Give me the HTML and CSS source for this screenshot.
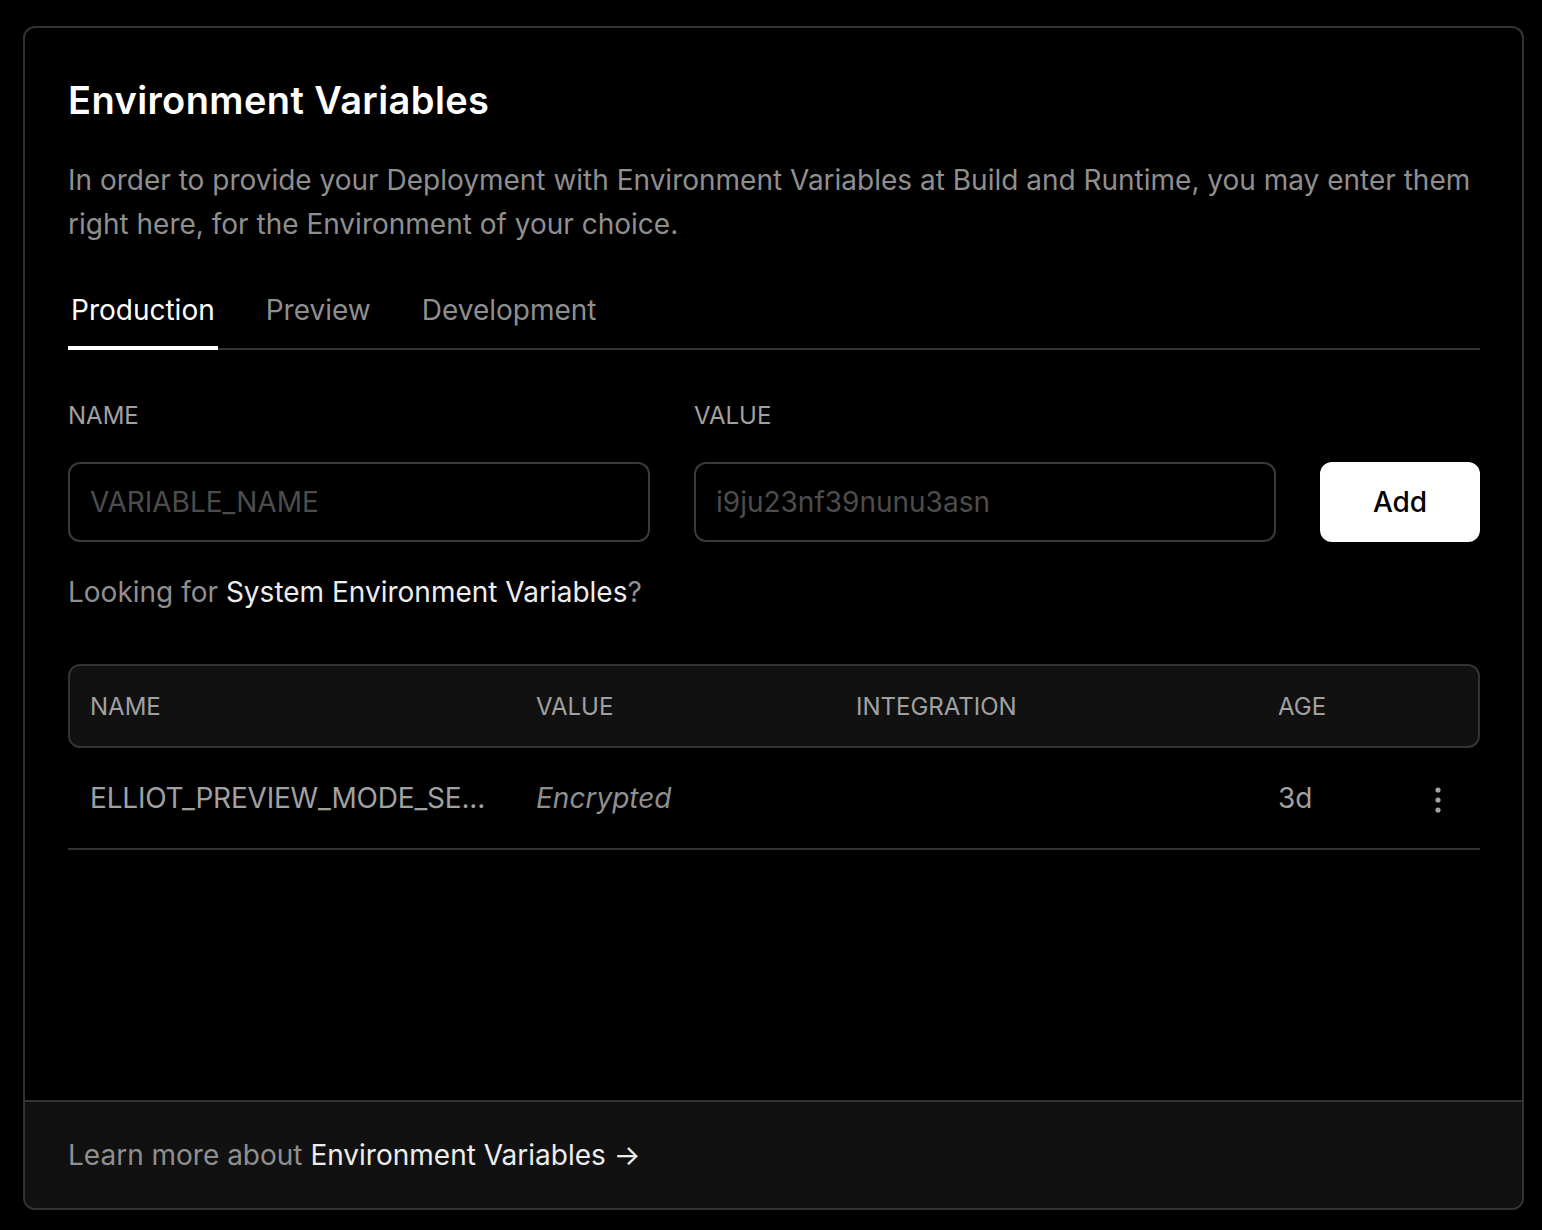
FILE: index.html
```html
<!DOCTYPE html>
<html lang="en">
<head>
<meta charset="utf-8">
<title>Environment Variables</title>
<link rel="stylesheet" href="styles.css">
</head>
<body>
<section class="card">
  <div class="card-body">
    <h1 class="title">Environment Variables</h1>
    <p class="desc">In order to provide your Deployment with Environment Variables at Build and Runtime, you may enter them right here, for the Environment of your choice.</p>

    <nav class="tabs">
      <span class="tab active">Production</span>
      <span class="tab">Preview</span>
      <span class="tab">Development</span>
    </nav>

    <div class="form">
      <div class="field">
        <label class="label">NAME</label>
        <div class="input placeholder">VARIABLE_NAME</div>
      </div>
      <div class="field">
        <label class="label">VALUE</label>
        <div class="input placeholder">i9ju23nf39nunu3asn</div>
      </div>
      <button class="btn">Add</button>
    </div>

    <p class="hint">Looking for <span class="strong">System Environment Variables</span>?</p>

    <div class="table">
      <div class="thead">
        <span class="cell">NAME</span>
        <span class="cell">VALUE</span>
        <span class="cell">INTEGRATION</span>
        <span class="cell">AGE</span>
        <span class="cell"></span>
      </div>
      <div class="row">
        <span class="cell name">ELLIOT_PREVIEW_MODE_SE...</span>
        <span class="cell enc">Encrypted</span>
        <span class="cell"></span>
        <span class="cell">3d</span>
        <span class="cell menu">
          <svg width="6" height="26" viewBox="0 0 6 26"><circle cx="3" cy="3" r="2.6" fill="#a1a1a1"/><circle cx="3" cy="13" r="2.6" fill="#a1a1a1"/><circle cx="3" cy="23" r="2.6" fill="#a1a1a1"/></svg>
        </span>
      </div>
    </div>
  </div>
  <footer class="card-foot">
    <span class="muted">Learn more about </span><span class="strong">Environment Variables →</span>
  </footer>
</section>
</body>
</html>
```

FILE: styles.css
```css
* { box-sizing: border-box; }
html, body { margin: 0; padding: 0; background: #000; }
body {
  font-family: Inter, "Noto Sans", sans-serif;
  color: #ededed;
  padding: 26px 18px 20px 23px;
}
.card {
  width: 1501px;
  height: 1184px;
  border: 2px solid #333;
  border-radius: 12px;
  background: #000;
  display: flex;
  flex-direction: column;
  overflow: hidden;
}
.card-body {
  flex: 1;
  padding: 50px 42px 0 43px;
}
.title {
  margin: 0;
  font-size: 38px;
  line-height: 44px;
  font-weight: 600;
  color: #fff;
  letter-spacing: 0.4px;
}
.desc {
  margin: 36px 0 0 0;
  font-size: 28px;
  line-height: 44px;
  color: #8f8f8f;
  font-weight: 400;
}
.tabs {
  display: flex;
  gap: 45px;
  margin-top: 42px;
  border-bottom: 2px solid #333;
}
.tab {
  font-size: 28px;
  line-height: 44px;
  padding: 0 3px 14px 3px;
  color: #8f8f8f;
  margin-bottom: -2px;
  border-bottom: 4px solid transparent;
}
.tab.active {
  color: #fff;
  border-bottom-color: #fff;
}
.form {
  display: flex;
  align-items: flex-end;
  gap: 44px;
  margin-top: 50px;
}
.field {
  width: 582px;
  display: flex;
  flex-direction: column;
}
.label {
  font-size: 24px;
  line-height: 32px;
  color: #a1a1a1;
  margin-bottom: 30px;
}
.input {
  height: 80px;
  border: 2px solid #3a3a3a;
  border-radius: 12px;
  padding: 0 20px;
  display: flex;
  align-items: center;
  font-size: 28px;
}
.placeholder { color: #4d4d4d; }
.btn {
  width: 160px;
  height: 80px;
  border: none;
  border-radius: 12px;
  background: #fff;
  color: #000;
  font-family: Inter, "Noto Sans", sans-serif;
  font-size: 28px;
  font-weight: 500;
}
.hint {
  margin: 28px 0 0 0;
  font-size: 28px;
  line-height: 44px;
  color: #8f8f8f;
}
.strong { color: #ededed; }
.table {
  margin-top: 50px;
}
.thead, .row {
  display: grid;
  grid-template-columns: 446px 320px 422px 150px 1fr;
  align-items: center;
}
.thead {
  height: 84px;
  background: #111;
  border: 2px solid #333;
  border-radius: 12px;
  font-size: 24px;
  color: #a1a1a1;
}
.thead .cell { padding-left: 20px; }
.row {
  height: 102px;
  border-bottom: 2px solid #333;
  font-size: 28px;
  color: #a1a1a1;
}
.row .cell { padding-left: 22px; }
.row .name { letter-spacing: -0.2px; }
.row .enc { font-style: italic; color: #8f8f8f; }
.row .menu {
  display: flex;
  justify-content: flex-end;
  padding-right: 39px;
  padding-top: 4px;
}
.card-foot {
  height: 108px;
  background: #111;
  border-top: 2px solid #333;
  padding: 0 43px;
  display: flex;
  align-items: center;
  font-size: 28px;
}
.muted { color: #8f8f8f; white-space: pre; }
```
